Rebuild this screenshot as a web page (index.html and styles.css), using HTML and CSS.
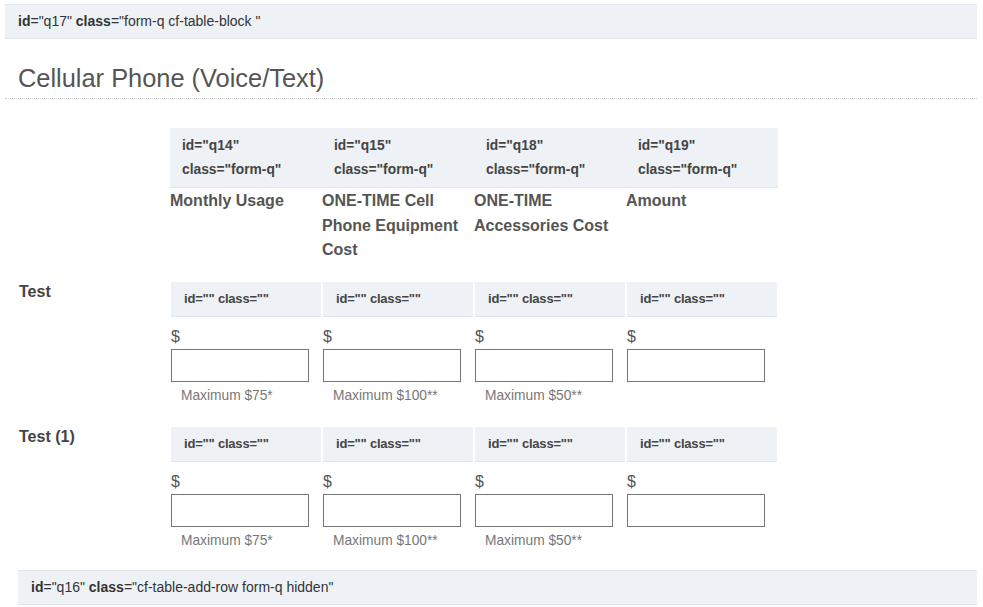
FILE: index.html
```html
<!DOCTYPE html>
<html>
<head>
<meta charset="utf-8">
<link rel="stylesheet" href="styles.css">
</head>
<body>
<div class="page">
  <div class="qbar"><b>id</b>="q17" <b>class</b>="form-q cf-table-block "</div>
  <h2 class="title">Cellular Phone (Voice/Text)</h2>

  <div class="head">
    <div class="hcol"><div class="htag">id="q14"<br>class="form-q"</div><div class="hlabel">Monthly Usage</div></div>
    <div class="hcol"><div class="htag">id="q15"<br>class="form-q"</div><div class="hlabel">ONE-TIME Cell Phone Equipment Cost</div></div>
    <div class="hcol"><div class="htag">id="q18"<br>class="form-q"</div><div class="hlabel">ONE-TIME Accessories Cost</div></div>
    <div class="hcol"><div class="htag">id="q19"<br>class="form-q"</div><div class="hlabel">Amount</div></div>
  </div>

  <div class="row">
    <div class="rlabel">Test</div>
    <div class="cell"><div class="rtag">id="" class=""</div><div class="dollar">$</div><input class="box" type="text"><div class="hint">Maximum $75*</div></div>
    <div class="cell"><div class="rtag">id="" class=""</div><div class="dollar">$</div><input class="box" type="text"><div class="hint">Maximum $100**</div></div>
    <div class="cell"><div class="rtag">id="" class=""</div><div class="dollar">$</div><input class="box" type="text"><div class="hint">Maximum $50**</div></div>
    <div class="cell"><div class="rtag">id="" class=""</div><div class="dollar">$</div><input class="box" type="text"></div>
  </div>

  <div class="row last">
    <div class="rlabel">Test (1)</div>
    <div class="cell"><div class="rtag">id="" class=""</div><div class="dollar">$</div><input class="box" type="text"><div class="hint">Maximum $75*</div></div>
    <div class="cell"><div class="rtag">id="" class=""</div><div class="dollar">$</div><input class="box" type="text"><div class="hint">Maximum $100**</div></div>
    <div class="cell"><div class="rtag">id="" class=""</div><div class="dollar">$</div><input class="box" type="text"><div class="hint">Maximum $50**</div></div>
    <div class="cell"><div class="rtag">id="" class=""</div><div class="dollar">$</div><input class="box" type="text"></div>
  </div>

  <div class="qbar addrow"><b>id</b>="q16" <b>class</b>="cf-table-add-row form-q hidden"</div>
</div>
</body>
</html>
```
FILE: styles.css
```css
* { box-sizing: border-box; }
body {
  margin: 0;
  background: #fff;
  font-family: "Liberation Sans", Arial, sans-serif;
  color: #333;
}
.page {
  padding: 4px 6px 0 5px;
}
.qbar {
  height: 35px;
  line-height: 33px;
  background: #eef2f6;
  border-top: 1px solid #dde7f1;
  border-bottom: 1px solid #dde7f1;
  padding-left: 13px;
  font-size: 14px;
  color: #333;
}
.qbar b { font-weight: bold; }
.title {
  margin: 0;
  padding: 24px 0 5px 13px;
  font-size: 25.4px;
  line-height: 30px;
  font-weight: normal;
  color: #555;
  border-bottom: 1px dotted #ccc;
}
.head {
  margin: 29px 0 0 165px;
  display: grid;
  grid-template-columns: repeat(4, 152px);
}
.htag {
  background: #eef2f6;
  border-bottom: 1px solid #dde7f1;
  padding: 6px 0 5px 12px;
  font-size: 13.8px;
  line-height: 24px;
  font-weight: bold;
  color: #444;
}
.hlabel {
  padding: 1px 6px 0 0;
  font-size: 16px;
  line-height: 24.5px;
  font-weight: bold;
  color: #555;
}
.row {
  display: grid;
  grid-template-columns: 166px repeat(4, 152px);
  margin-top: 19px;
}
.row + .row { margin-top: 0; }
.rlabel {
  padding-left: 14px;
  font-size: 16px;
  line-height: 20px;
  font-weight: bold;
  color: #444;
}
.cell {
  width: 150px;
  padding-bottom: 23px;
}
.last .cell { padding-bottom: 21px; }
.rtag {
  height: 35px;
  line-height: 34px;
  background: #eef2f6;
  border-bottom: 1px solid #dde7f1;
  padding-left: 13px;
  font-size: 13px;
  letter-spacing: -0.2px;
  font-weight: bold;
  color: #444;
}
.dollar {
  margin-top: 10px;
  font-size: 16px;
  line-height: 20px;
  color: #555;
}
.box {
  display: block;
  margin: 2px 0 0 0;
  width: 138px;
  height: 33px;
  border: 1px solid #777;
  border-radius: 0;
  background: #fff;
  padding: 0;
}
.hint {
  margin-top: 6px;
  padding-left: 10px;
  font-size: 13.75px;
  line-height: 16px;
  color: #777;
}
.addrow {
  margin-left: 13px;
}
```
